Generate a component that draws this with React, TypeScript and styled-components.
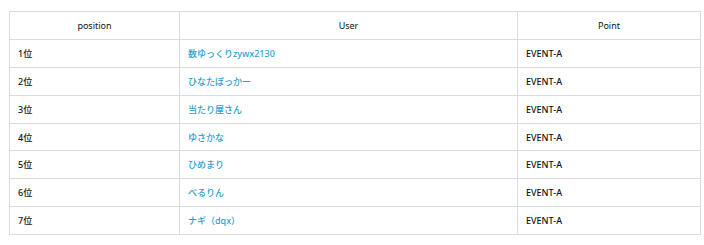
import React from 'react';
import styled, { createGlobalStyle } from 'styled-components';

const GlobalStyle = createGlobalStyle`
  body {
    margin: 0;
    background: #fff;
    font-family: "Noto Sans", "Noto Sans CJK JP", sans-serif;
  }
`;

const Wrapper = styled.div`
  padding: 11px 7px 0 9px;
`;

const Table = styled.table`
  width: 688px;
  border-collapse: collapse;
  table-layout: fixed;
  font-size: 9px;
  color: #111;
`;

const HeadCell = styled.th<{ $width: number }>`
  width: ${(p) => p.$width}px;
  height: 26.9px;
  padding: 0;
  border: 1px solid #dcdcdc;
  font-weight: normal;
  text-align: center;
`;

const Cell = styled.td`
  height: 26.9px;
  padding: 0 0 0 8px;
  border: 1px solid #dcdcdc;
  font-weight: 500;
`;

const UserLink = styled.a`
  color: #2a9fd0;
  text-decoration: none;
`;

const rows = [
  '数ゆっくりzywx2130',
  'ひなたぼっかー',
  '当たり屋さん',
  'ゆさかな',
  'ひめまり',
  'べるりん',
  'ナギ（dqx）',
];

export default function App() {
  return (
    <>
      <GlobalStyle />
      <Wrapper>
        <Table>
          <thead>
            <tr>
              <HeadCell $width={169}>position</HeadCell>
              <HeadCell $width={337}>User</HeadCell>
              <HeadCell $width={182}>Point</HeadCell>
            </tr>
          </thead>
          <tbody>
            {rows.map((name, i) => (
              <tr key={i}>
                <Cell>{i + 1}位</Cell>
                <Cell>
                  <UserLink href="#">{name}</UserLink>
                </Cell>
                <Cell>EVENT-A</Cell>
              </tr>
            ))}
          </tbody>
        </Table>
      </Wrapper>
    </>
  );
}
